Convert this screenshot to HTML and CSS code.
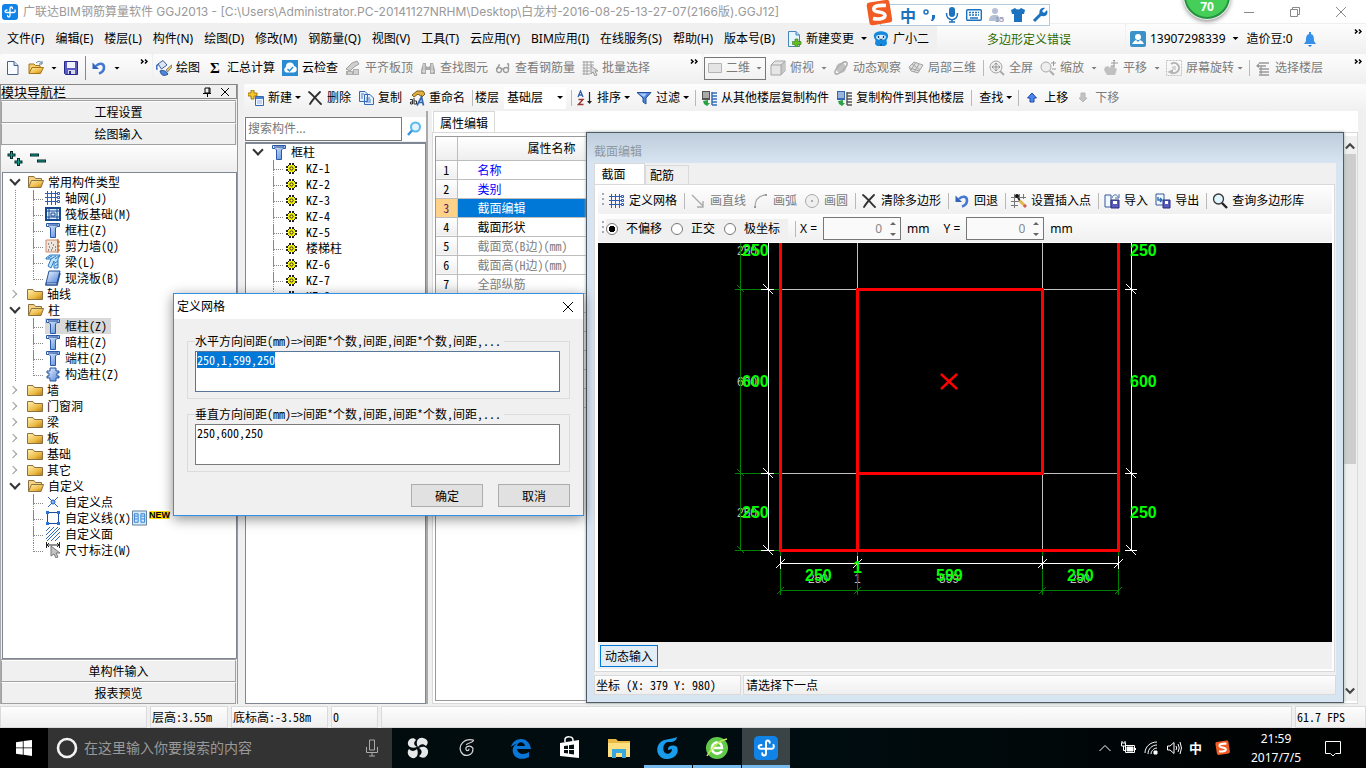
FILE: index.html
```html
<!DOCTYPE html>
<html lang="zh-CN">
<head>
<meta charset="utf-8">
<title>广联达BIM钢筋算量软件 GGJ2013</title>
<link rel="stylesheet" href="styles.css">
</head>
<body>
<svg class="sprite" width="0" height="0" aria-hidden="true">
<defs>
<linearGradient id="gold" x1="0" y1="0" x2="1" y2="1"><stop offset="0" stop-color="#fff0b0"/><stop offset=".6" stop-color="#eebc48"/><stop offset="1" stop-color="#b9790e"/></linearGradient>
<linearGradient id="blue" x1="0" y1="0" x2="1" y2="1"><stop offset="0" stop-color="#f0f7ff"/><stop offset="1" stop-color="#4d83d8"/></linearGradient>
</defs>
<symbol id="app" viewBox="0 0 16 16"><rect width="16" height="16" rx="3" fill="#1183e6"/><path d="M10.500 4.500C10.500 2.500 8 2.500 8 4.500V11.500C8 13.500 5.500 13.500 5.500 11.500M5 6C2.500 6 2.500 8.500 4.500 8.500H11.500C13 8.500 13.500 7.500 13 6" fill="none" stroke="#fff" stroke-width="1.300" stroke-linecap="round"/></symbol>
<symbol id="new" viewBox="0 0 16 16"><path d="M2.500 1.500H9L13 5.500V14.500H2.500Z" fill="#f8fbff" stroke="#4a6288"/><path d="M9 1.500V5.500H13" fill="#c9daf0" stroke="#4a6288"/></symbol>
<symbol id="open" viewBox="0 0 16 16"><path d="M1 13V4H6L7.500 5.500H12V8" fill="#f3cf72" stroke="#a87414"/><path d="M1 13.500L4 7.500H15.500L12.500 13.500Z" fill="url(#gold)" stroke="#a87414"/><path d="M8 3C10 1 12 1 13.500 3M14 1V4H11" fill="none" stroke="#51729f"/></symbol>
<symbol id="save" viewBox="0 0 16 16"><path d="M1.500 1.500H14.500V14.500H2.500L1.500 13.500Z" fill="#5a5cc4" stroke="#26298c"/><rect x="4" y="2" width="8" height="6" fill="#eef3fd"/><path d="M5 10H12V14H5Z" fill="#d8dae8"/><path d="M6 11H8V14H6Z" fill="#2d3195"/></symbol>
<symbol id="undo" viewBox="0 0 16 16"><path d="M5 6C8 2.500 13 3 13 7.500C13 10.500 11 12.500 8 13.500" fill="none" stroke="#4478d2" stroke-width="2.600"/><path d="M1.500 2.500V9H8Z" fill="#3263bd"/></symbol>
<symbol id="paint" viewBox="0 0 16 16"><path d="M2 4L7 .5L11 5L5.500 9Z" fill="#dce6f5" stroke="#3f5f98"/><path d="M3 4C-.5 5 .5 9 1.500 9.500" fill="none" stroke="#3f6fbd" stroke-width="1.600"/><path d="M15.500 5L10 10L11.500 12L16 7Z" fill="#f2cb57" stroke="#465675" stroke-width=".7"/><path d="M4 11C7 9.500 10 11 12 14C9 16.500 5 16 4 11Z" fill="#4a86dc" stroke="#264f92"/></symbol>
<symbol id="cloud" viewBox="0 0 16 16"><rect width="16" height="16" fill="#2a8dd4"/><path d="M4 12.500A3 3 0 0 1 4 7A4 4 0 0 1 12 6A3.300 3.300 0 0 1 12 12.500Z" fill="#fff"/><path d="M5.500 9L7.500 11L11 7" fill="none" stroke="#2a8dd4" stroke-width="1.500"/></symbol>
<symbol id="align" viewBox="0 0 16 16"><path d="M1 9L7 3L12 1L14 4L9 7L5 11Z" fill="#cfcfcf" stroke="#a0a0a0"/><path d="M1 11H8V15H1ZM8 9H14V15H8Z" fill="#adadad"/><path d="M9 11H13M9 13H13M3 13H7" stroke="#f4f4f4"/></symbol>
<symbol id="binoc" viewBox="0 0 16 16"><path d="M3 3H6V6L8 7L10 6V3H13L15 10V14H10V10H6V14H1V10Z" fill="#aaa"/><path d="M4 4V13M12 4V13M2 11H5M11 11H14" stroke="#e5e5e5"/></symbol>
<symbol id="glasses" viewBox="0 0 16 16"><g fill="none" stroke="#9a9a9a" stroke-width="1.300"><circle cx="4" cy="10" r="2.500"/><circle cx="11" cy="10" r="2.500"/><path d="M1.500 10L4 5L5 5M13.500 10V4L12 4M6.500 9H8.500"/></g></symbol>
<symbol id="batch" viewBox="0 0 16 16"><path d="M.5 2H12M.5 5H12M.5 8H8M.5 11H8M.5 14H8M2 1V15M5 1V15M9 1V7" stroke="#a2a2a2"/><path d="M9 6V14L11 12L13 16L15 15L13 11H16Z" fill="#ddd" stroke="#999"/></symbol>
<symbol id="rect" viewBox="0 0 16 16"><path d="M1.500 3.500H14.500V12.500H1.500Z" fill="#e4e4e4" stroke="#b4b4b4"/></symbol>
<symbol id="cube" viewBox="0 0 16 16"><path d="M1 5L5 1H15V11L11 15H1Z" fill="#e6e6e6" stroke="#a5a5a5"/><path d="M11 5L15 1V11L11 15" fill="#c6c6c6"/><path d="M1 5H11V15M11 5L15 1" fill="none" stroke="#a5a5a5"/></symbol>
<symbol id="orbit" viewBox="0 0 16 16"><circle cx="8" cy="8" r="5" fill="#c2c2c2"/><ellipse cx="8" cy="8" rx="8" ry="3" fill="none" stroke="#adadad" stroke-width="1.400" transform="rotate(-45 8 8)"/></symbol>
<symbol id="local3d" viewBox="0 0 16 16"><path d="M1 7L6 2L15 5L10 13L3 11Z" fill="#dfdfdf" stroke="#a5a5a5"/><path d="M4 4L12 10M8 2L3 10M11 4L6 12M2 8L11 11" stroke="#a5a5a5" fill="none"/></symbol>
<symbol id="fit" viewBox="0 0 16 16"><circle cx="7" cy="7" r="6" fill="#eee" stroke="#a5a5a5"/><path d="M3 7H11M7 3V11M5.500 4.500L7 3L8.500 4.500M5.500 9.500L7 11L8.500 9.500M4.500 5.500L3 7L4.500 8.500M9.500 5.500L11 7L9.500 8.500" fill="none" stroke="#959595"/><path d="M11 11L15 15" stroke="#aaa" stroke-width="2"/></symbol>
<symbol id="zoom" viewBox="0 0 16 16"><circle cx="6" cy="7" r="5" fill="#eee" stroke="#aaa"/><path d="M10 11L14 15" stroke="#aaa" stroke-width="2"/><path d="M11 3H16M13.500 1V6M12 9H16" stroke="#999"/></symbol>
<symbol id="pan" viewBox="0 0 16 16"><path d="M2 7L5 6L7 8L8 5H11L12 8L14 9L12 15H4L1 10Z" fill="#c0c0c0"/><path d="M11 0V7M8 3H15M10 1L11 0L12 1" stroke="#999" fill="none"/></symbol>
<symbol id="rotate" viewBox="0 0 16 16"><path d="M.5 .5H15.500V15.500H.5Z" fill="none" stroke="#c0c0c0" stroke-dasharray="2 1"/><path d="M5 4A5 5 0 1 1 5 12" fill="none" stroke="#b3b3b3" stroke-width="2"/><path d="M7 9V14.500L1.500 12Z" fill="#b3b3b3"/><path d="M6 6H10V10H6Z" fill="#d5d5d5"/></symbol>
<symbol id="floors" viewBox="0 0 16 16"><path d="M4 3H14M2 6H11M6 6V14M4 9H14M4 12H14M4 15H14" stroke="#999" stroke-width="1.300" fill="none"/><path d="M1 6L4 3V8Z" fill="#999"/></symbol>
<symbol id="addc" viewBox="0 0 16 16"><path d="M3 0H6V3H9V6H6V9H3V6H0V3H3Z" fill="#f6c928" stroke="#8f6600" stroke-width=".8"/><path d="M7.500 6.500H15.500V15.500H7.500Z" fill="#eef5ff" stroke="#3568ae"/><path d="M8 7H15V9H8Z" fill="#4982d0"/><path d="M9 11H14M9 13H14" stroke="#92b5e4"/></symbol>
<symbol id="del" viewBox="0 0 16 16"><path d="M2 2C6 5 10 10 14 14M13 2C10 5 6 9 3 14" fill="none" stroke="#303030" stroke-width="1.800" stroke-linecap="round"/></symbol>
<symbol id="copy" viewBox="0 0 16 16"><path d="M1.500 1.500H7L9.500 4V11.500H1.500ZM6.500 4.500H12L15.500 8V14.500H6.500Z" fill="#e4efff" stroke="#3768b3"/><path d="M3 4H6M3 6H5M3 8H5M8 8H12M8 10H13M8 12H13" stroke="#4d7fc6"/></symbol>
<symbol id="rename" viewBox="0 0 16 16"><path d="M3 5L8 1H14L16 4L13 7L9 4L5 7Z" fill="#e0b13e" stroke="#7d5b21"/><path d="M1 9.500H3.500V14H1.500V12H3.500M5 8V14H7.500V11H5" fill="none" stroke="#333"/><path d="M8 15.500L12.500 7L14.500 15.500M10 12.500H14" fill="none" stroke="#2f65b5" stroke-width="1.700"/></symbol>
<symbol id="sort" viewBox="0 0 16 16"><path d="M1 7L3.500 1L6 7M2 5H5" fill="none" stroke="#315ca8" stroke-width="1.300"/><path d="M1.500 9.500H6L1.500 14.500H6.500" fill="none" stroke="#9b3535" stroke-width="1.400"/><path d="M12.500 2V12" stroke="#222" stroke-width="1.200"/><path d="M10 11H15L12.500 14Z" fill="#222"/></symbol>
<symbol id="filter" viewBox="0 0 16 16"><path d="M1 2.500H15L10 8V14L7 12V8Z" fill="#4d83d9" stroke="#2552a0"/><path d="M3 3.500H11L8 7Z" fill="#a9cbfa"/></symbol>
<symbol id="cfrom" viewBox="0 0 16 16"><path d="M1 1H9V10H1Z" fill="#555"/><path d="M2 3H8M2 5H8M2 7H8" stroke="#fff"/><path d="M11 2V15M11 3H16M11 6H16M11 9H16M11 12H16M11 15H16" stroke="#376db9" stroke-width="1.500"/><path d="M2 11L7 10V13H9L6 16L3 14Z" fill="#2ba345"/></symbol>
<symbol id="cto" viewBox="0 0 16 16"><path d="M1 1H9V10H1Z" fill="#3769b4"/><path d="M2 3H8M2 5H8M2 7H8" stroke="#fff"/><path d="M11 2V15M11 3H16M11 6H16M11 9H16M11 12H16M11 15H16" stroke="#555" stroke-width="1.500"/><path d="M2 11L7 10V13H9L6 16L3 14Z" fill="#2ba345"/></symbol>
<symbol id="up" viewBox="0 0 16 16"><path d="M8 3L12.500 8H10V12H6V8H3.500Z" fill="#4b86f0" stroke="#2248a5"/></symbol>
<symbol id="down" viewBox="0 0 16 16"><path d="M8 12L12 8H10V3H6V8H4Z" fill="#c4c4c4" stroke="#b5b5b5"/></symbol>
<symbol id="search" viewBox="0 0 16 16"><circle cx="9.500" cy="6" r="4.500" fill="#e1f5ff" stroke="#58b8f0" stroke-width="2"/><path d="M6 9.500L2 14" stroke="#3794de" stroke-width="2.500"/></symbol>
<symbol id="change" viewBox="0 0 16 16"><path d="M2.500 .5H10L13.500 4V15.500H2.500Z" fill="#e7f5ff" stroke="#4585b9"/><path d="M10 .5V4H13.500" fill="#a9d3f1" stroke="#4585b9"/><path d="M9 8H12V10.500H15V13.500H12V16H9V13.500H6.500V10.500H9Z" fill="#62bd20" stroke="#347510" stroke-width=".6"/></symbol>
<symbol id="mascot" viewBox="0 0 16 16"><path d="M4 1C6 0 10 0 12 1C15 2 16 5 14.500 7.500L13.500 9L14 13L12 15H4L2 13L2.500 9L1.500 7.500C0 5 1 2 4 1Z" fill="#1689dd"/><path d="M3 6C3 3 13 3 13 6C13 10 3 10 3 6Z" fill="#d8efff"/><path d="M5.500 5V7M10.500 5V7" stroke="#123c68" stroke-width="1.300"/><path d="M6.500 8Q8 9 9.500 8M8 13V15" stroke="#123c68" fill="none"/></symbol>
<symbol id="user" viewBox="0 0 16 16"><rect width="16" height="16" rx="2" fill="#3b92c9"/><circle cx="8" cy="6" r="3" fill="#fff"/><path d="M2 13Q4 9.500 6 9L8 11L10 9Q13 10 14 13Z" fill="#fff"/></symbol>
<symbol id="bell" viewBox="0 0 16 16"><path d="M7 1H9V3C12 4 12 7 12 10L14 13H2L4 10C4 7 4 4 7 3Z" fill="#3590ea"/><path d="M6 14H10L8 16Z" fill="#1974d1"/></symbol>
<symbol id="folder" viewBox="0 0 16 16"><path d="M.5 3.500H6L7.500 5.500H15.500V13.500H.5Z" fill="url(#gold)" stroke="#8b7142"/></symbol>
<symbol id="fopen" viewBox="0 0 16 16"><path d="M.5 13V2.500H6L7.500 4.500H13.500V7" fill="#f4d47e" stroke="#8b7142"/><path d="M.5 13.500L3.500 6.500H15.500L13 13.500Z" fill="url(#gold)" stroke="#8b7142"/></symbol>
<symbol id="grid" viewBox="0 0 16 16"><path d="M0 3.500H12M0 7.500H12M0 11.500H12M2.500 1V15M6.500 1V15M10.500 1V15" stroke="#2d5bb5"/><path d="M12.500 2.500H14.500V4.500H12.500ZM12.500 6.500H14.500V8.500H12.500ZM12.500 10.500H14.500V12.500H12.500Z" fill="none" stroke="#2d5bb5"/></symbol>
<symbol id="raft" viewBox="0 0 16 16"><path d="M1 2H15V14H1Z" fill="#dcecff" stroke="#15488e" stroke-width="2"/><path d="M4 2V14M12 2V14M1 5H15M1 11H15M6 7H10V10H6Z" fill="none" stroke="#15488e"/></symbol>
<symbol id="column" viewBox="0 0 16 16"><path d="M1.500 1.500H14.500V4.500H12L10.500 6V15.500H5.500V6L4 4.500H1.500Z" fill="url(#blue)" stroke="#2858a7"/><path d="M3 3H13" stroke="#17448e"/></symbol>
<symbol id="wall" viewBox="0 0 16 16"><path d="M1 2H13V14H1Z" fill="#eee5dc" stroke="#d08a68"/><path d="M13 1V15M15 4H12M15 8H12M15 12H12" stroke="#b76424"/><path d="M3 6H4M6 5H7M8 7H9M4 9H5M7 10H8M3 12H4M10 12H11M6 12H7M10 9H11" stroke="#353535"/></symbol>
<symbol id="beam" viewBox="0 0 16 16"><path d="M1 4L5 1H15L13 5V14H9V7L6 14L3 12L6 5H1Z" fill="#bee3ff" stroke="#2979c0"/><path d="M3 4L7 2M6 5L11 2M10 5L14 2M10 9L13 7M10 12L13 10" stroke="#2979c0"/></symbol>
<symbol id="slab" viewBox="0 0 16 16"><path d="M4 1H15L12 13H1Z" fill="url(#blue)" stroke="#224f98"/><path d="M1 13V15H12L15 3" fill="none" stroke="#224f98" stroke-width="1.500"/></symbol>
<symbol id="concol" viewBox="0 0 16 16"><path d="M5 2H11V5H14V7H12V10H14V12H11V15H5V12H2V10H4V7H2V5H5Z" fill="url(#blue)" stroke="#24539f"/></symbol>
<symbol id="cpt" viewBox="0 0 16 16"><path d="M3 3L13 13M13 3L3 13" stroke="#245cb6"/><circle cx="8" cy="8" r="2" fill="#7eb5f2" stroke="#245cb6"/></symbol>
<symbol id="cline" viewBox="0 0 16 16"><path d="M2.500 2.500H13.500V13.500H2.500Z" fill="none" stroke="#1d4aa4"/><path d="M1 1H4V4H1ZM12 1H15V4H12ZM1 12H4V15H1ZM12 12H15V15H12Z" fill="#2672d6"/></symbol>
<symbol id="cface" viewBox="0 0 16 16"><path d="M1 5L5 1M1 9L9 1M1 13L13 1M2 15L15 2M6 15L15 6M10 15L15 10" stroke="#2d68ba"/></symbol>
<symbol id="dim" viewBox="0 0 16 16"><path d="M1.500 0V6M14.500 0V6M2 3H14M2 3L4 1M2 3L4 5M14 3L12 1M14 3L12 5" stroke="#222" fill="none"/><path d="M6 4V14L9 12L11 16L13 15L11 11H15Z" fill="#c4c4c4" stroke="#777"/></symbol>
<symbol id="gear" viewBox="0 0 11 11"><path d="M3 0H5V2H6V0H8V2H9V3H11V5H9V6H11V8H9V9H8V11H6V9H5V11H3V9H2V8H0V6H2V5H0V3H2V2H3Z" fill="#222"/><path d="M3 2H8V3H9V8H8V9H3V8H2V3H3Z" fill="#f4ee00"/><circle cx="5.500" cy="5.500" r="1.600" fill="#ff0" stroke="#333" stroke-width="1"/></symbol>
<symbol id="line" viewBox="0 0 16 16"><path d="M2 2L13 13M13 8V14H7" fill="none" stroke="#aaa" stroke-width="1.400"/></symbol>
<symbol id="arc" viewBox="0 0 16 16"><path d="M2 14C2 7 6 3 12 2" fill="none" stroke="#aaa" stroke-width="1.300"/><path d="M12 1H14V3H12ZM1 13H3V15H1Z" fill="#999"/></symbol>
<symbol id="circle" viewBox="0 0 16 16"><circle cx="8" cy="8" r="6.500" fill="#efefef" stroke="#aaa"/><circle cx="8" cy="8" r="1" fill="#999"/></symbol>
<symbol id="setpt" viewBox="0 0 16 16"><path d="M0 4.500H15M0 8.500H9M0 12.500H7M3.500 1V15M8.500 1V7M12.500 1V6" stroke="#777"/><circle cx="6" cy="3" r="2" fill="#111"/><path d="M7 5L9 8" stroke="#222" stroke-width="1.500"/><path d="M8.500 7.500L14 13" stroke="#e3b64e" stroke-width="3"/><path d="M13 12L15 14" stroke="#d45e5e" stroke-width="3"/></symbol>
<symbol id="import" viewBox="0 0 16 16"><path d="M1 2H7V14H1Z" fill="#f1f6ff" stroke="#365a98"/><path d="M7 7H15V15H7Z" fill="#595bbc" stroke="#292b81"/><path d="M9 8H13V11H9Z" fill="#fff"/><path d="M8 5C9 1 13 1 14 4M15 1V5H11" fill="none" stroke="#496da4"/></symbol>
<symbol id="export" viewBox="0 0 16 16"><path d="M1 1H9V12H1Z" fill="#f1f6ff" stroke="#365a98"/><path d="M8 7H15V15H8Z" fill="#595bbc" stroke="#292b81"/><path d="M10 8H13V11H10Z" fill="#fff"/><path d="M3 4V7H7M5 5L7 7L5 9" fill="none" stroke="#2c6db0" stroke-width="1.400"/></symbol>
<symbol id="lens" viewBox="0 0 16 16"><circle cx="6.500" cy="6" r="5" fill="#dff5ff" stroke="#353535" stroke-width="1.300"/><path d="M10 10L15 15" stroke="#222" stroke-width="2.400"/></symbol>
<symbol id="more" viewBox="0 0 8 5"><path d="M1 .5L3 2.500L1 4.500M5 .5L7 2.500L5 4.500" fill="none" stroke="#000" stroke-width="1.500"/></symbol>
<symbol id="sogou" viewBox="0 0 28 28"><rect x="2" y="2" width="23" height="23" rx="3" fill="#f15b24" transform="rotate(-9 14 14)"/><path d="M20 6.500C12 6 7 7 8 11C9 14 19 12 19 16.500C19 20 12 20.500 7 19.500" fill="none" stroke="#fff" stroke-width="3.600"/></symbol>
<symbol id="flower" viewBox="0 0 24 24"><g fill="#e7e8e9"><path d="M11 11C5 13 1 10 2 6C3 2 8 1 10 4C7 7 8 9 11 11Z"/><path d="M12 11C9 6 12 1 17 2C22 3 23 7 20 10C17 7 14 8 12 11Z"/><path d="M13 12C18 9 23 12 22 17C21 22 16 23 13 20C17 17 16 14 13 12Z"/><path d="M11 13C13 18 11 23 6 22C1 20 1 15 3 13C6 16 9 15 11 13Z"/></g></symbol>
<symbol id="gswirl" viewBox="0 0 24 24"><path d="M20 2.500C8 0 1 9 5 17C9 24 20 21 19 12C16 8 9 10 11 14C12 16 15 15 14 13" fill="none" stroke="currentColor" stroke-width="1.500"/><path d="M20 2.500C19 6 15 5 11 8" fill="none" stroke="currentColor" stroke-width="1.500"/></symbol>
<symbol id="gblue" viewBox="0 0 24 24"><path d="M21 1C20 6 16 6 12 6C7 7 6 14 9 17C12 19 16 17 16 13L12 14C11 10 17 8 21 11C24 18 17 24 10 23C2 22 -1 14 3 8C7 2 14 4 21 1Z" fill="#199cec"/></symbol>
<symbol id="edge" viewBox="0 0 24 24"><path d="M2 11C4 1 20 -1 22 13H8C9 19 16 19 20 16V21C10 26 2 20 4 12C5 9 9 7 9 7C6 8 3 10 2 11ZM8 10H16C15 5 9 5 8 10Z" fill="#0877d7"/></symbol>
<symbol id="store" viewBox="0 0 24 24"><path d="M2 7L21 4V22L2 20Z" fill="#fff"/><path d="M7 6V3C8 0 15 0 15 4V5" fill="none" stroke="#fff" stroke-width="1.500"/><path d="M6 10L10 9.500V13H6ZM11 9.300L16 8.500V13H11ZM6 14H10V17.500L6 17ZM11 14H16V18.500L11 17.700Z" fill="#051012"/></symbol>
<symbol id="explorer" viewBox="0 0 24 24"><path d="M1 3H9L11 5H23V21H1Z" fill="#e9b946"/><path d="M1 7H23V21H1Z" fill="#ffdf80"/><path d="M5 13H19V22H15V17H9V22H5Z" fill="#37a9df"/></symbol>
<symbol id="egreen" viewBox="0 0 24 24"><circle cx="12" cy="12" r="11" fill="#61c94a"/><path d="M17 15C13 20 6 17 7 11C8 5 17 5 17 12H7" fill="none" stroke="#fff" stroke-width="2.500"/><path d="M2 20C6 13 14 4 22 3" fill="none" stroke="#c5ed55" stroke-width="1.500"/></symbol>
</svg>

<header class="titlebar">
  <svg class="i"><use href="#app"/></svg>
  <h1>广联达BIM钢筋算量软件 GGJ2013 - [C:\Users\Administrator.PC-20141127NRHM\Desktop\白龙村-2016-08-25-13-27-07(2166版).GGJ12]</h1>
  <div class="winctl">
    <button aria-label="最小化"><svg viewBox="0 0 12 12"><path d="M1 6.500H11"/></svg></button>
    <button aria-label="还原"><svg viewBox="0 0 12 12"><path d="M1.500 3.500H8.500V10.500H1.500ZM3.500 3V1.500H10.500V8.500H9"/></svg></button>
    <button aria-label="关闭"><svg viewBox="0 0 12 12"><path d="M1 1L11 11M11 1L1 11"/></svg></button>
  </div>
</header>

<div class="ime">
  <svg class="logo"><use href="#sogou"/></svg>
  <b>中</b>
  <svg viewBox="0 0 16 16"><circle cx="4" cy="5" r="2" fill="none" stroke="#1d72bf" stroke-width="1.500"/><path d="M10 8H13V11L11 14H9L10 11Z" fill="#1d72bf"/></svg>
  <svg viewBox="0 0 16 16"><rect x="5" y="0" width="6" height="10" rx="3" fill="#1d72bf"/><path d="M2.500 6C2 15 14 15 13.500 6M8 12V15M5 15H11" fill="none" stroke="#1d72bf" stroke-width="1.500"/></svg>
  <svg viewBox="0 0 16 16"><rect x=".7" y="2.700" width="14.600" height="10.600" rx="1" fill="none" stroke="#1d72bf" stroke-width="1.400"/><path d="M3 5.500H13M3 8H13" stroke="#1d72bf" stroke-width="1.600" stroke-dasharray="2 1"/><path d="M4 11H12" stroke="#1d72bf" stroke-width="1.500"/></svg>
  <svg viewBox="0 0 16 16"><circle cx="7" cy="4" r="3" fill="#b4c0d5"/><path d="M1 14C1 8 5 8 7 8C10 8 12 9 12 14Z" fill="#b4c0d5"/><text x="7" y="15" font-size="8" font-weight="bold" fill="#8e9db7" font-family="Liberation Sans">15</text></svg>
  <svg viewBox="0 0 16 16"><path d="M1 3L5 1Q8 4 11 1L15 3L14 7H12V15H4V7H2Z" fill="#1d72bf"/></svg>
  <svg viewBox="0 0 16 16"><path d="M2 14L9 7" stroke="#1d72bf" stroke-width="3"/><path d="M13 1L10 4L12 6L15 3C17 8 12 11 8 8C6 4 9 0 13 1Z" fill="#1d72bf"/></svg>
</div>
<div class="speedball">70</div>

<nav class="menurow" aria-label="主菜单">
  <div class="menus">
    <button>文件(F)</button><button>编辑(E)</button><button>楼层(L)</button><button>构件(N)</button><button>绘图(D)</button><button>修改(M)</button><button>钢筋量(Q)</button><button>视图(V)</button><button>工具(T)</button><button>云应用(Y)</button><button>BIM应用(I)</button><button>在线服务(S)</button><button>帮助(H)</button><button>版本号(B)</button>
    <button class="t"><svg class="i"><use href="#change"/></svg>新建变更<i class="caret"></i></button>
    <button class="t"><svg class="i"><use href="#mascot"/></svg>广小二</button>
  </div>
  <div class="band notice song">多边形定义错误</div>
  <div class="band account">
    <button class="t"><svg class="i"><use href="#user"/></svg>13907298339<i class="caret"></i></button>
    <span>造价豆:0</span>
    <svg class="i"><use href="#bell"/></svg>
    <svg class="more"><use href="#more"/></svg>
  </div>
</nav>

<div class="toolrow">
  <div class="band files">
    <button class="t" aria-label="新建"><svg class="i"><use href="#new"/></svg></button>
    <button class="t" aria-label="打开"><svg class="i"><use href="#open"/></svg><i class="caret"></i></button>
    <button class="t" aria-label="保存"><svg class="i"><use href="#save"/></svg></button>
    <i class="sep"></i>
    <button class="t" aria-label="撤销"><svg class="i"><use href="#undo"/></svg><i class="caret"></i></button>
    <svg class="more"><use href="#more"/></svg>
  </div>
  <div class="band draw">
    <button class="t"><svg class="i"><use href="#paint"/></svg>绘图</button>
    <button class="t"><b class="sigma">Σ</b>汇总计算</button>
    <button class="t"><svg class="i"><use href="#cloud"/></svg>云检查</button>
    <button class="t off"><svg class="i"><use href="#align"/></svg>平齐板顶</button>
    <button class="t off"><svg class="i"><use href="#binoc"/></svg>查找图元</button>
    <button class="t off"><svg class="i"><use href="#glasses"/></svg>查看钢筋量</button>
    <button class="t off"><svg class="i"><use href="#batch"/></svg>批量选择</button>
    <svg class="more"><use href="#more"/></svg>
  </div>
  <div class="band view">
    <label class="dimsel off"><svg class="i"><use href="#rect"/></svg><span class="combo"><select aria-label="视图维度"><option>二维</option></select></span></label>
    <button class="t off"><svg class="i"><use href="#cube"/></svg>俯视<i class="caret"></i></button>
    <button class="t off"><svg class="i"><use href="#orbit"/></svg>动态观察</button>
    <button class="t off"><svg class="i"><use href="#local3d"/></svg>局部三维</button>
    <i class="sep"></i>
    <button class="t off"><svg class="i"><use href="#fit"/></svg>全屏</button>
    <button class="t off"><svg class="i"><use href="#zoom"/></svg>缩放<i class="caret"></i></button>
    <button class="t off"><svg class="i"><use href="#pan"/></svg>平移<i class="caret"></i></button>
    <button class="t off tight"><svg class="i"><use href="#rotate"/></svg>屏幕旋转<i class="caret"></i></button>
    <i class="sep"></i>
    <button class="t off"><svg class="i"><use href="#floors"/></svg>选择楼层</button>
    <svg class="more"><use href="#more"/></svg>
  </div>
</div>

<main class="work">
  <aside class="navpane song">
    <div class="navhead"><h2>模块导航栏</h2>
      <button aria-label="固定"><svg viewBox="0 0 10 10"><path d="M3 1H8V6H3ZM1 6.500H9M5.500 7V10M7 1V6" fill="none" stroke="#000"/></svg></button>
      <button aria-label="关闭"><svg viewBox="0 0 10 10"><path d="M1 1L9 9M9 1L1 9" stroke="#000"/></svg></button>
    </div>
    <button class="navbtn">工程设置</button>
    <button class="navbtn">绘图输入</button>
    <div class="expanders">
      <button aria-label="全部展开"><svg viewBox="0 0 16 16"><path d="M4.500 0V8M.5 4H8.500M11.500 7V15M7.500 11H15.500" stroke="#002d2b" stroke-width="3"/><path d="M4.500 1V7M1.500 4H7.500M11.500 8V14M8.500 11H14.500" stroke="#18a094"/></svg></button>
      <button aria-label="全部折叠"><svg viewBox="0 0 16 16"><path d="M0 4H9M7 10H16" stroke="#002d2b" stroke-width="3"/><path d="M1 4H8M8 10H15" stroke="#18a094"/></svg></button>
    </div>
    <ul class="tree">
      <li class="open"><div class="node"><svg class="i"><use href="#fopen"/></svg>常用构件类型</div>
        <ul>
          <li><svg class="i"><use href="#grid"/></svg><span>轴网(J)</span></li>
          <li><svg class="i"><use href="#raft"/></svg><span>筏板基础(M)</span></li>
          <li><svg class="i"><use href="#column"/></svg><span>框柱(Z)</span></li>
          <li><svg class="i"><use href="#wall"/></svg><span>剪力墙(Q)</span></li>
          <li><svg class="i"><use href="#beam"/></svg><span>梁(L)</span></li>
          <li><svg class="i"><use href="#slab"/></svg><span>现浇板(B)</span></li>
        </ul></li>
      <li><div class="node"><svg class="i"><use href="#folder"/></svg>轴线</div></li>
      <li class="open"><div class="node"><svg class="i"><use href="#fopen"/></svg>柱</div>
        <ul>
          <li class="sel"><svg class="i"><use href="#column"/></svg><span>框柱(Z)</span></li>
          <li><svg class="i"><use href="#column"/></svg><span>暗柱(Z)</span></li>
          <li><svg class="i"><use href="#column"/></svg><span>端柱(Z)</span></li>
          <li><svg class="i"><use href="#concol"/></svg><span>构造柱(Z)</span></li>
        </ul></li>
      <li><div class="node"><svg class="i"><use href="#folder"/></svg>墙</div></li>
      <li><div class="node"><svg class="i"><use href="#folder"/></svg>门窗洞</div></li>
      <li><div class="node"><svg class="i"><use href="#folder"/></svg>梁</div></li>
      <li><div class="node"><svg class="i"><use href="#folder"/></svg>板</div></li>
      <li><div class="node"><svg class="i"><use href="#folder"/></svg>基础</div></li>
      <li><div class="node"><svg class="i"><use href="#folder"/></svg>其它</div></li>
      <li class="open"><div class="node"><svg class="i"><use href="#fopen"/></svg>自定义</div>
        <ul>
          <li><svg class="i"><use href="#cpt"/></svg><span>自定义点</span></li>
          <li><svg class="i"><use href="#cline"/></svg><span>自定义线(X)</span><svg class="book" viewBox="0 0 16 16"><path d="M.5 .5H15.500V15.500H.5Z" fill="#d5ebff" stroke="#5a7792"/><path d="M2.500 3.500H6.500V12.500H2.500ZM9.500 3.500H13.500V12.500H9.500ZM3 6H6M3 9H6M10 6H13M10 9H13" fill="none" stroke="#2a7bd0"/></svg><b class="badge">NEW</b></li>
          <li><svg class="i"><use href="#cface"/></svg><span>自定义面</span></li>
          <li><svg class="i"><use href="#dim"/></svg><span>尺寸标注(W)</span></li>
        </ul></li>
    </ul>
    <button class="navbtn">单构件输入</button>
    <button class="navbtn">报表预览</button>
  </aside>

  <section class="editor">
    <div class="band comptools">
      <button class="t tight"><svg class="i"><use href="#addc"/></svg>新建<i class="caret"></i></button>
      <button class="t"><svg class="i"><use href="#del"/></svg>删除</button>
      <button class="t"><svg class="i"><use href="#copy"/></svg>复制</button>
      <button class="t"><svg class="i"><use href="#rename"/></svg>重命名</button>
      <i class="sep"></i>
      <label class="floor">楼层<span class="combo"><select><option>基础层</option></select></span></label>
      <i class="sep"></i>
      <button class="t tight"><svg class="i"><use href="#sort"/></svg>排序<i class="caret"></i></button>
      <button class="t tight"><svg class="i"><use href="#filter"/></svg>过滤<i class="caret"></i></button>
      <i class="sep"></i>
      <button class="t"><svg class="i"><use href="#cfrom"/></svg>从其他楼层复制构件</button>
      <button class="t"><svg class="i"><use href="#cto"/></svg>复制构件到其他楼层</button>
      <i class="sep"></i>
      <button class="t tight find">查找<i class="caret"></i></button>
      <i class="sep"></i>
      <button class="t"><svg class="i"><use href="#up"/></svg>上移</button>
      <button class="t off"><svg class="i"><use href="#down"/></svg>下移</button>
    </div>
    <div class="panes">
      <div class="complist">
        <div class="searchbar"><input type="text" placeholder="搜索构件..." aria-label="搜索构件"><button aria-label="搜索"><svg class="i"><use href="#search"/></svg></button></div>
        <ul class="tree comps song">
          <li class="open"><div class="node"><svg class="i"><use href="#column"/></svg>框柱</div>
            <ul>
              <li><svg class="gear"><use href="#gear"/></svg><span>KZ-1</span></li>
              <li><svg class="gear"><use href="#gear"/></svg><span>KZ-2</span></li>
              <li><svg class="gear"><use href="#gear"/></svg><span>KZ-3</span></li>
              <li><svg class="gear"><use href="#gear"/></svg><span>KZ-4</span></li>
              <li><svg class="gear"><use href="#gear"/></svg><span>KZ-5</span></li>
              <li><svg class="gear"><use href="#gear"/></svg><span>楼梯柱</span></li>
              <li><svg class="gear"><use href="#gear"/></svg><span>KZ-6</span></li>
              <li><svg class="gear"><use href="#gear"/></svg><span>KZ-7</span></li>
              <li><svg class="gear"><use href="#gear"/></svg><span>KZ-8</span></li>
            </ul></li>
        </ul>
      </div>
      <div class="props">
        <div class="tabs song"><button class="on">属性编辑</button></div>
        <div class="sheet">
          <div class="tablebox">
            <table class="song">
              <thead><tr><th></th><th>属性名称</th><th></th></tr></thead>
              <tbody>
                <tr class="link"><th>1</th><td>名称</td><td></td></tr>
                <tr class="link"><th>2</th><td>类别</td><td></td></tr>
                <tr class="picked"><th>3</th><td>截面编辑</td><td></td></tr>
                <tr><th>4</th><td>截面形状</td><td></td></tr>
                <tr class="dimmed"><th>5</th><td>截面宽(B边)(mm)</td><td></td></tr>
                <tr class="dimmed"><th>6</th><td>截面高(H边)(mm)</td><td></td></tr>
                <tr class="dimmed"><th>7</th><td>全部纵筋</td><td></td></tr>
                <tr><th></th><td></td><td></td></tr><tr><th></th><td></td><td></td></tr><tr><th></th><td></td><td></td></tr><tr><th></th><td></td><td></td></tr><tr><th></th><td></td><td></td></tr><tr><th></th><td></td><td></td></tr>
              </tbody>
            </table>
          </div>
          <div class="scroll"><svg viewBox="0 0 10 10"><path d="M1.500 7L5 3.500L8.500 7"/></svg><i></i><svg viewBox="0 0 10 10"><path d="M1.500 3L5 6.500L8.500 3"/></svg></div>
        </div>
      </div>
    </div>
  </section>
</main>

<footer class="status song">
  <span class="c1"></span><span class="c2">层高:3.55m</span><span class="c3">底标高:-3.58m</span><span class="c4">0</span><span class="c5"></span><span class="c6">61.7 FPS</span>
</footer>

<section class="window" aria-label="截面编辑">
  <h2 class="song">截面编辑</h2>
  <div class="client">
    <div class="wtabs song"><button class="on">截面</button><button>配筋</button></div>
    <div class="page">
      <div class="band wtools">
        <i class="grip"></i>
        <button class="t"><svg class="i"><use href="#grid"/></svg>定义网格</button>
        <i class="sep"></i>
        <button class="t off"><svg class="i"><use href="#line"/></svg>画直线</button>
        <button class="t off"><svg class="i"><use href="#arc"/></svg>画弧</button>
        <button class="t off"><svg class="i"><use href="#circle"/></svg>画圆</button>
        <i class="sep"></i>
        <button class="t"><svg class="i"><use href="#del"/></svg>清除多边形</button>
        <i class="sep"></i>
        <button class="t"><svg class="i"><use href="#undo"/></svg>回退</button>
        <i class="sep"></i>
        <button class="t"><svg class="i"><use href="#setpt"/></svg>设置插入点</button>
        <i class="sep"></i>
        <button class="t"><svg class="i"><use href="#import"/></svg>导入</button>
        <button class="t"><svg class="i"><use href="#export"/></svg>导出</button>
        <i class="sep"></i>
        <button class="t"><svg class="i"><use href="#lens"/></svg>查询多边形库</button>
      </div>
      <div class="band wtools opts">
        <i class="grip"></i>
        <div class="radios">
          <label><input type="radio" name="mode" checked>不偏移</label>
          <label><input type="radio" name="mode">正交</label>
          <label><input type="radio" name="mode">极坐标</label>
        </div>
        <i class="sep"></i>
        <label class="coord">X =<span class="spin"><input type="text" value="0"><svg viewBox="0 0 6 16"><path d="M0 4L3 1L6 4ZM0 12L3 15L6 12Z"/></svg></span>mm</label>
        <label class="coord">Y =<span class="spin"><input type="text" value="0"><svg viewBox="0 0 6 16"><path d="M0 4L3 1L6 4ZM0 12L3 15L6 12Z"/></svg></span>mm</label>
      </div>
      <svg class="cad" viewBox="598 243 734 399" role="img" aria-label="截面图">
        <g fill="none" stroke="#c0c0c0"><path d="M857.500 243V289M1042.500 243V550M780 289.500H1118M780 473.500H1118"/></g>
        <g class="dimgray"><text x="737" y="255">250</text><text x="737" y="386">600</text><text x="737" y="517">250</text><text x="808" y="583">250</text><text x="854" y="583">1</text><text x="939" y="583">599</text><text x="1070" y="583">250</text></g>
        <g fill="none" stroke="#008000"><path d="M740.500 243V551M735 289.500H780M735 473.500H780M735 550.500H780M780.500 552V595M857.500 552V595M1042.500 552V595M1118.500 552V595M780 590.500H1119M737 285L744 292M737 469L744 476M737 546L744 553M777 594L784 587M854 594L861 587M1039 594L1046 587M1115 594L1122 587"/></g>
        <g fill="none" stroke="#fff"><path d="M768.500 243V551M761 289.500H774M761 473.500H774M761 550.500H774M763 284L773 294M763 468L773 478M763 545L773 555M1131.500 243V551M1125 289.500H1137M1125 473.500H1137M1125 550.500H1137M1126 284L1136 294M1126 468L1136 478M1126 545L1136 555M780 563.500H1119M780.500 556V569M857.500 556V569M1042.500 556V569M1118.500 556V569M776 568L785 559M853 568L862 559M1038 568L1047 559M1114 568L1123 559"/></g>
        <g class="dimgreen"><text x="742" y="256">250</text><text x="742" y="387">600</text><text x="742" y="518">250</text><text x="1130" y="256">250</text><text x="1130" y="387">600</text><text x="1130" y="518">250</text><text x="805" y="581">250</text><text x="853" y="573">1</text><text x="936" y="581">599</text><text x="1067" y="581">250</text></g>
        <g fill="none" stroke="#f00" stroke-width="3"><path d="M780.500 243V550.500H1118.500V243M857.500 550V289.500H1042.500V473.500H857.500"/><path d="M941 374L957 389M957 374L941 389" stroke-width="2.400"/></g>
      </svg>
      <div class="foot"><button class="song">动态输入</button></div>
    </div>
    <div class="wstatus song"><span>坐标 (X: 379 Y: 980)</span><span class="msg">请选择下一点</span></div>
  </div>
</section>

<section class="dialog" role="dialog" aria-label="定义网格">
  <header><h2>定义网格</h2><button aria-label="关闭"><svg viewBox="0 0 12 12"><path d="M1 1L11 11M11 1L1 11" stroke="#000" fill="none"/></svg></button></header>
  <form class="song">
    <fieldset><legend><label for="hgap">水平方向间距(mm)=&gt;间距*个数,间距,间距*个数,间距,...</label></legend><textarea class="field" id="hgap" autofocus spellcheck="false">250,1,599,250</textarea></fieldset>
    <fieldset><legend><label for="vgap">垂直方向间距(mm)=&gt;间距*个数,间距,间距*个数,间距,...</label></legend><textarea class="field" id="vgap" spellcheck="false">250,600,250</textarea></fieldset>
    <div class="actions"><button type="button">确定</button><button type="button">取消</button></div>
  </form>
</section>

<div class="taskbar">
  <button class="start" aria-label="开始"><svg viewBox="0 0 16 16"><path d="M0 2.200L6.800 1.200V7.500H0ZM7.600 1.100L16 0V7.500H7.600ZM0 8.300H6.800V14.700L0 13.700ZM7.600 8.300H16V16L7.600 14.800Z" fill="#fff"/></svg></button>
  <label class="cortana"><svg class="ring" viewBox="0 0 22 22"><circle cx="11" cy="11" r="9" fill="none" stroke="#f4f4f4" stroke-width="2.600"/></svg><input type="text" placeholder="在这里输入你要搜索的内容" aria-label="搜索"><svg class="mic" viewBox="0 0 14 18"><path d="M4.500 1H9.500V11H4.500ZM1.500 8V13.500H12.500V8M7 14V17M4 17H10" fill="none" stroke="#aaa"/></svg></label>
  <button class="task" aria-label="应用"><svg><use href="#flower"/></svg></button>
  <button class="task pale" aria-label="浏览器"><svg><use href="#gswirl"/></svg></button>
  <button class="task wide" aria-label="Edge"><svg><use href="#edge"/></svg></button>
  <button class="task" aria-label="应用商店"><svg><use href="#store"/></svg></button>
  <button class="task" aria-label="文件资源管理器"><svg><use href="#explorer"/></svg></button>
  <button class="task run" aria-label="G浏览器"><svg><use href="#gblue"/></svg></button>
  <button class="task run" aria-label="安全浏览器"><svg><use href="#egreen"/></svg></button>
  <button class="task run current" aria-label="GGJ2013"><svg><use href="#app"/></svg></button>
  <div class="tray">
    <svg viewBox="0 0 16 16"><path d="M2.500 11L8 5.500L13.500 11"/></svg>
    <svg viewBox="0 0 16 16"><path d="M5.500 5.500H14.500V12.500H5.500ZM15.500 8V10M1 3H6M2 1V3M5 1V3M1.500 3V6H5.500V3M3.500 6V10.500H5"/><path d="M7 7H13V11H7Z" fill="#fff"/></svg>
    <svg viewBox="0 0 16 16"><path d="M2 13C2 7 7 2 14 2M5 14C5 9 9 5 14 5M8 14C8 11 11 8 14 8"/><path d="M11 11H14V14H11Z" fill="#fff"/></svg>
    <svg viewBox="0 0 16 16"><path d="M1.500 6H4L8 2.500V13.500L4 10H1.500ZM10 6Q11.500 8 10 10M12 4Q14.500 8 12 12M14 2Q17 8 14 14"/></svg>
    <b>中</b>
    <svg class="s"><use href="#sogou"/></svg>
    <time>21:59<br>2017/7/5</time>
    <svg class="note" viewBox="0 0 18 18"><path d="M1.500 2.500H16.500V14.500H11.500L9 17L6.500 14.500H1.500Z"/></svg>
  </div>
</div>
<script src="dialog.js"></script>
</body>
</html>
```
FILE: styles.css
```css
* { box-sizing: border-box; }
body {
  margin: 0;
  height: 100vh;
  display: flex;
  flex-direction: column;
  position: relative;
  overflow: hidden;
  background: #f0f0f0;
  color: #000;
  font: 12px/16px "Noto Sans", "Noto Sans CJK SC", sans-serif;
}
button, input, select, textarea { font: inherit; color: inherit; margin: 0; padding: 0; border: 0; background: none; border-radius: 0; }
button { white-space: nowrap; }
h1, h2 { font: inherit; margin: 0; }
ul { list-style: none; margin: 0; padding: 0; }
svg { display: block; flex: none; }
.sprite { position: absolute; }
.song { font-family: "Noto Sans CJK SC", sans-serif; font-feature-settings: "hwid" 1; }
.song button, .song textarea, button.song { font-feature-settings: inherit; }
.i { width: 16px; height: 16px; }
.more { width: 8px; height: 5px; margin: 5px 4px 0 auto; align-self: flex-start; }

.titlebar { height: 23px; flex: none; display: flex; align-items: center; gap: 5px; padding-left: 2px; background: #fff; color: #999; font-family: Inter, "Noto Sans CJK SC", sans-serif; }
.titlebar h1 { flex: 1; white-space: nowrap; }
.winctl { display: flex; gap: 34px; padding-right: 19px; }
.winctl svg { width: 12px; height: 12px; fill: none; stroke: #888; }
.winctl button { display: block; }

.ime { position: absolute; left: 880px; top: 4px; height: 22px; width: 170px; display: flex; align-items: center; gap: 6px; padding-left: 19px; background: #fff; border: 1px solid #b3c9de; color: #1d72bf; }
.ime svg { width: 16px; height: 16px; }
.ime b { font: bold 16px/20px "Noto Sans CJK SC", sans-serif; }
.ime .logo { position: absolute; left: -15px; top: -6px; width: 28px; height: 28px; }
.speedball { position: absolute; left: 1184px; top: -27px; width: 46px; height: 46px; border-radius: 50%; background: #45cf58; border: 2px solid #25923f; box-shadow: 0 0 0 1px #eee, 0 2px 5px #777; color: #fff; font-weight: bold; text-align: center; line-height: 63px; }

.band { background: linear-gradient(#fdfdfd, #f0f0f0); display: flex; align-items: center; gap: 7px; border-radius: 2px; }
.t { display: flex; align-items: center; gap: 4px; }
.off { color: #7b7b7b; }
.caret { width: 6px; height: 3px; margin: 0 -1px 0 3px; background: currentColor; clip-path: polygon(0 0, 100% 0, 50% 100%); flex: none; }
.tight .caret { margin-left: -1px; }
.sep { width: 1px; height: 16px; margin-right: -2px; background: #b9b9b9; flex: none; }
.sigma { width: 16px; text-align: center; font: bold 15px/16px "Liberation Serif", serif; }

.menurow { height: 30px; flex: none; display: grid; grid-template-columns: 936px 188px 1fr; gap: 1px; padding-top: 1px; }
.menus { display: flex; align-items: center; gap: 11px; padding-left: 7px; white-space: nowrap; }
.menus .t { margin-right: -4px; }
.notice { justify-content: center; color: #2f6b00; padding-right: 4px; }
.account { padding-left: 4px; gap: 9px; }
.toolrow { height: 30px; flex: none; display: grid; grid-template-columns: 152px 549px 1fr; gap: 1px; padding: 1px 0; }
.files { padding-left: 5px; }
.files .sep { height: 24px; margin-left: -1px; background: #888; }
.draw { padding-left: 3px; }
.view { padding-left: 1px; }
.combo { display: grid; align-items: center; }
.combo select { appearance: none; grid-area: 1 / 1; }
.combo::after { content: ""; grid-area: 1 / 1; justify-self: end; width: 6px; height: 3px; margin-right: 3px; background: currentColor; clip-path: polygon(0 0, 100% 0, 50% 100%); pointer-events: none; }
.dimsel { display: flex; align-items: center; gap: 3px; width: 62px; height: 23px; padding-left: 2px; border: 1px solid #777; margin-right: -3px; }
.dimsel .combo { flex: 1; }

.work { flex: 1; min-height: 0; display: grid; grid-template-columns: 238px 1fr; gap: 6px; padding-bottom: 2px; }
.navpane { display: flex; flex-direction: column; min-height: 0; border-left: 1px solid #aaa; border-right: 1px solid #999; margin-top: 1px; }
.navhead { display: flex; align-items: center; height: 15px; border: 1px solid #888; margin-bottom: 2px; margin-left: -1px; }
.navhead h2 { flex: 1; font-size: 13px; line-height: 13px; }
.navhead button { margin-right: 4px; padding: 0 2px; }
.navhead svg { width: 10px; height: 10px; }
.navbtn { height: 22px; flex: none; text-align: center; border: 1px solid #a0a0a0; border-top-color: #fff; box-shadow: 0 -1px #a0a0a0; margin-right: 1px; }
.expanders { height: 27px; flex: none; display: flex; gap: 7px; align-items: center; padding-left: 6px; background: linear-gradient(#fdfdfd, #eee); border-radius: 3px 0 0 0; }
.expanders svg { width: 16px; height: 16px; }
.tree { flex: 1; min-height: 0; overflow: hidden; background: #fff; border: 1px solid #7f8694; padding: 1px 0 0 4px; margin: 0 0 1px 1px; line-height: 16px; white-space: nowrap; }
.node { display: flex; align-items: center; height: 16px; gap: 4px; }
.node::before { content: ""; width: 5px; height: 5px; margin: 0 4px 0 3px; border: solid #999; border-width: 1px 1px 0 0; transform: rotate(45deg); }
.open > .node::before { width: 6px; height: 6px; border-color: #333; border-width: 0 2px 2px 0; margin: -4px 2px 0 4px; }
.node .i { margin-left: 3px; }
.tree ul { margin-left: 8px; padding-left: 18px; background: repeating-linear-gradient(#888 0 1px, transparent 1px 2px) left / 1px 100% no-repeat; }
.tree > li:last-child > ul { background: none; }
.tree ul li { display: flex; align-items: center; height: 16px; gap: 2px; }
.tree ul li:not(:last-child) { background: repeating-linear-gradient(#888 0 1px, transparent 1px 2px) left / 1px 100% no-repeat; }
.tree ul li::before { content: ""; width: 9px; height: 9px; align-self: flex-start; border: dotted #888; border-width: 0 0 1px 1px; flex: none; }
.tree ul span { padding: 0 4px 0 2px; }
.sel .i, .sel span { background: #d9d9d9; }
.tree ul .sel span { margin-left: -2px; padding-left: 4px; }
.book { width: 15px; height: 16px; margin-left: -5px; }
.badge { color: #000; background: #ffe000; font: bold 9px/8px "Liberation Sans", sans-serif; margin-bottom: 6px; }

.editor { display: flex; flex-direction: column; min-width: 0; min-height: 0; }
.comptools { height: 27px; flex: none; padding-left: 4px; margin-top: 1px; }
.floor { display: flex; align-items: center; gap: 5px; margin-left: -3px; }
.floor .combo { width: 62px; height: 22px; padding-left: 3px; background: #fff; margin-right: -2px; }
.find { padding-left: 2px; }
.panes { flex: 1; min-height: 0; display: grid; grid-template-columns: 184px 1fr; gap: 4px; padding-right: 8px; }
.complist { display: flex; flex-direction: column; min-height: 0; border-right: 2px solid #aaa; padding-top: 6px; }
.searchbar { display: flex; height: 24px; margin-bottom: 1px; background: #fff; }
.searchbar input { flex: 1; min-width: 0; border: 1px solid #7a7a7a; padding: 0 2px; margin-left: 1px; }
.searchbar input::placeholder { color: #777; opacity: 1; }
.searchbar button { width: 24px; padding-left: 4px; }
.comps.tree { border-width: 2px 1px 1px; margin-bottom: 0; padding: 0 0 0 4px; }
.comps.tree ul { padding-left: 14px; margin-left: 6px; }
.comps.tree ul li { margin-left: 3px; }
.comps .node { gap: 4px; }
.gear { width: 11px; height: 11px; margin: 0 5px 0 1px; }
.props { display: flex; flex-direction: column; min-width: 0; min-height: 0; }
.tabs { height: 21px; display: flex; padding-left: 1px; background: #fff; flex: none; }
.tabs button { padding: 0 6px; border: 1px solid #d9d9d9; border-bottom: 0; background: #fff; line-height: 17px; }
.sheet { flex: 1; min-height: 0; display: flex; border: 1px solid #d9d9d9; padding: 3px 0 2px 2px; background: #fff; }
.tablebox { flex: 1; border: 1px solid #999; overflow: hidden; }
table { border-collapse: collapse; width: 100%; table-layout: fixed; }
th, td { border: 1px solid #bdbdbd; height: 19px; padding: 0; font-weight: normal; line-height: 16px; }
th { background: linear-gradient(#fff, #eee); text-align: center; }
tr > :first-child { width: 21px; border-left: 0; }
thead th { height: 23px; border-top: 0; }
thead th:nth-child(2) { width: 189px; }
td { padding-left: 20px; }
.link td { color: #00f; }
.picked th { background: #ffd28a; color: #602060; }
.picked td { background: #0078d7; color: #fff; }
.dimmed td { color: #808080; }
.scroll { width: 15px; display: flex; flex-direction: column; align-items: center; gap: 2px; padding: 4px 0; background: #f0f0f0; }
.scroll svg { width: 12px; height: 12px; fill: none; stroke: #444; stroke-width: 1.8; }
.scroll i { width: 13px; height: 310px; margin-bottom: auto; background: #cdcdcd; }

.status { height: 22px; flex: none; display: flex; gap: 3px; background: #f0f0f0; }
.status span { border: 1px solid #dadada; background: linear-gradient(#fdfdfd, #efefef); padding: 2px 0 0 1px; line-height: 16px; }
.c1 { width: 147px; }
.c2 { width: 78px; }
.c3 { width: 97px; }
.c4 { width: 47px; }
.c5 { flex: 1; }
.c6 { width: 71px; }

.window { position: absolute; left: 586px; right: 22px; top: 132px; bottom: 65px; display: flex; flex-direction: column; padding: 0 7px 7px; border: 1px solid #525a63; background: linear-gradient(#becddb, #d7e4f2 30px); box-shadow: 0 0 3px #9aa; }
.window h2 { height: 30px; padding-top: 10px; line-height: 16px; color: #8f979f; flex: none; }
.client { flex: 1; min-height: 0; display: flex; flex-direction: column; background: #f0f0f0; }
.wtabs { height: 21px; flex: none; display: flex; align-items: flex-end; }
.wtabs button { height: 19px; width: 44px; border: 1px solid #d9d9d9; border-bottom: 0; padding-right: 10px; }
.wtabs .on { height: 21px; width: 51px; background: #fff; padding-right: 12px; }
.page { flex: 1; min-height: 0; display: flex; flex-direction: column; margin-right: 1px; padding: 2px 2px 2px 3px; background: #fff; border: 1px solid #d9d9d9; }
.wtools { height: 27px; flex: none; padding-left: 4px; }
.grip { width: 2px; height: 15px; background: repeating-linear-gradient(#aaa 0 2px, transparent 2px 5px); margin-right: -2px; }
.opts { margin: 1px 0; }
.radios { display: flex; align-items: center; gap: 9px; height: 20px; background: #f0f0f0; padding-right: 8px; margin-left: -3px; }
.radios label { display: flex; align-items: center; gap: 8px; }
.radios input { appearance: none; width: 12px; height: 12px; border: 1px solid #777; border-radius: 50%; background: #fff; }
.radios input:checked { background: radial-gradient(#000 0 3px, #fff 3px); }
.coord { display: flex; align-items: center; gap: 6px; margin-right: 8px; margin-left: -1px; }
.spin { display: flex; align-items: center; width: 78px; height: 23px; border: 1px solid #777; background: #fafafa; padding-right: 4px; gap: 8px; }
.spin input { flex: 1; min-width: 0; text-align: right; color: #888; }
.spin svg { width: 6px; height: 16px; fill: #666; }
.cad { flex: 1; min-height: 0; width: 100%; background: #000; }
.dimgray { font: 12px "Liberation Sans", sans-serif; fill: #c0c0c0; }
.dimgreen { font: bold 16px "Liberation Sans", sans-serif; fill: #0f0; }
.foot { flex: none; background: #f0f0f0; padding: 3px 2px 2px; }
.foot button { display: block; width: 58px; height: 22px; border: 1px solid #0078d7; background: #e3edf7; }
.wstatus { flex: none; height: 23px; display: flex; gap: 2px; padding-top: 3px; }
.wstatus span { width: 147px; border: 1px solid #dadada; background: linear-gradient(#fdfdfd, #efefef); padding-left: 1px; line-height: 18px; }
.wstatus .msg { flex: 1; padding-left: 2px; }

.dialog { position: absolute; left: 173px; top: 293px; width: 411px; border: 1px solid #3390ea; background: #f0f0f0; box-shadow: 0 3px 12px rgba(0, 0, 0, .45); }
.dialog header { height: 25px; display: flex; justify-content: space-between; align-items: center; padding: 0 9px 0 3px; background: #fff; }
.dialog header svg { width: 12px; height: 12px; }
.dialog form { padding: 14px 13px 8px 13px; }
fieldset { margin: 0 0 7px; min-width: 0; border: 1px solid #dcdcdc; padding: 2px 9px 6px 7px; }
legend { padding: 0 3px 0 0; line-height: 16px; white-space: nowrap; }
.field { display: block; width: 100%; height: 41px; resize: none; overflow: hidden; border: 1px solid #7a7a7a; background: #fff; padding: 1px; line-height: 14px; outline: 0; }
.field:focus { border-color: #56779a; }
.field::selection { background: #0078d7; color: #fff; }
.actions { display: flex; justify-content: flex-end; gap: 15px; padding-top: 5px; }
.actions button { width: 72px; height: 23px; border: 1px solid #adadad; background: #e1e1e1; }

.taskbar { height: 40px; flex: none; display: flex; background: linear-gradient(90deg, #020a0d, #000d10 60%, #000); color: #fff; }
.start { width: 48px; background: #000; display: grid; place-items: center; }
.start svg { width: 16px; height: 16px; }
.cortana { width: 344px; background: #333; display: flex; align-items: center; padding: 0 13px 0 8px; gap: 5px; margin-right: 2px; }
.ring { width: 22px; height: 22px; }
.mic { width: 14px; height: 18px; }
.cortana input { flex: 1; min-width: 0; font-size: 14px; line-height: 20px; padding-left: 1px; }
.cortana input::placeholder { color: #999; opacity: 1; }
.task { width: 48px; display: grid; place-items: center; border: solid transparent; border-width: 0 0 3px; margin-right: 1px; padding-top: 3px; }
.task svg { width: 24px; height: 24px; }
.task.pale { color: #d5d5d5; }
.task.pale svg { width: 20px; height: 20px; }
.task.wide { margin: 0 1px 0 5px; }
.run { border-bottom-color: #76b9ed; }
.task.current { background: #3a4346; }
.tray { margin-left: auto; display: flex; align-items: center; gap: 7px; padding-right: 24px; }
.tray svg { width: 16px; height: 16px; fill: none; stroke: #fff; }
.tray .s { stroke: none; margin: 0 3px 0 6px; }
.tray b { font-size: 13px; }
.tray time { width: 70px; text-align: center; line-height: 19px; }
.tray .note { width: 18px; height: 18px; margin-left: 6px; }
```
FILE: dialog.js
```js
// The first field opens focused with its value selected.
const first = document.getElementById("hgap");
first.focus();
first.select();
```
